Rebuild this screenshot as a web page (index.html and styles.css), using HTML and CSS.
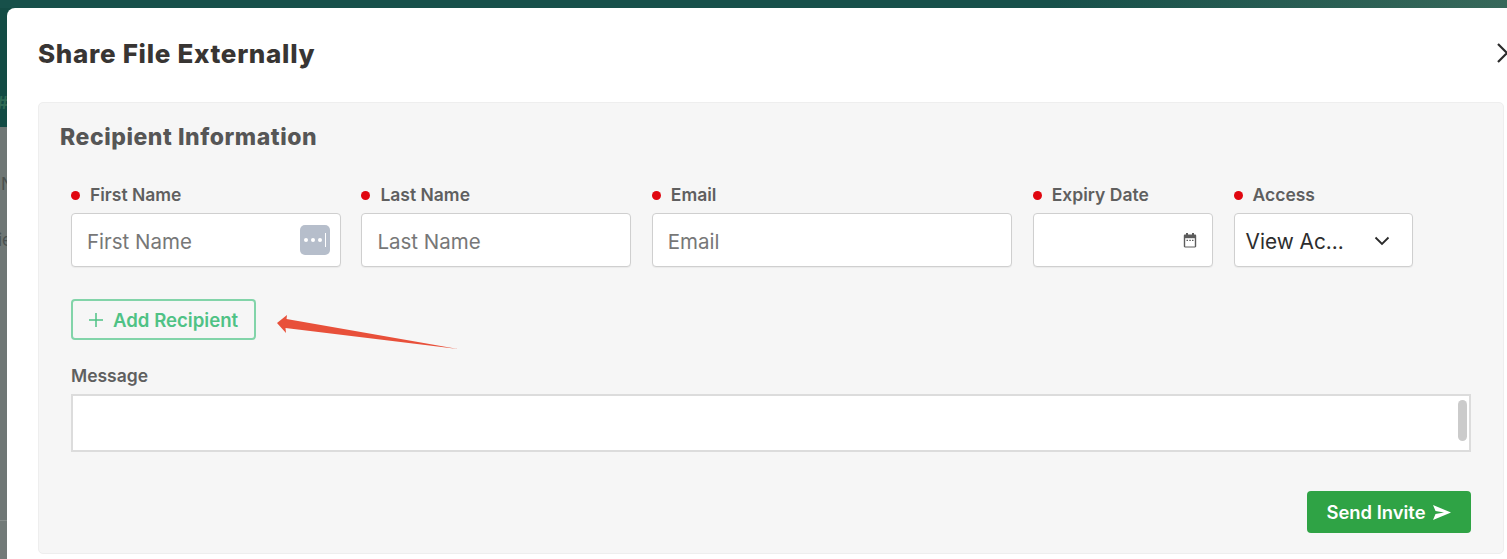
FILE: index.html
```html
<!DOCTYPE html>
<html lang="en">
<head>
<meta charset="utf-8">
<title>Share File Externally</title>
<link rel="stylesheet" href="styles.css">
</head>
<body>
<div class="backdrop">
  <div class="backdrop-header"><span class="hash">#</span></div>
  <div class="backdrop-body">
    <span class="peek peek-n">N</span>
    <span class="peek peek-ie">ie</span>
  </div>
  <div class="backdrop-foot"></div>
</div>

<section class="modal">
  <header class="modal-head">
    <h1 class="modal-title">Share File Externally</h1>
    <svg class="close" width="20" height="20" viewBox="0 0 20 20"><path d="M1 1l18 18M19 1L1 19" fill="none" stroke="#2b2b2b" stroke-width="2.200"/></svg>
  </header>

  <div class="card">
    <h2 class="card-title">Recipient Information</h2>

    <div class="fields">
      <div class="field">
        <label class="label req">First Name</label>
        <div class="input">
          <span class="placeholder">First Name</span>
          <span class="keys"><i></i><i></i><i></i><b></b></span>
        </div>
      </div>
      <div class="field">
        <label class="label req">Last Name</label>
        <div class="input"><span class="placeholder">Last Name</span></div>
      </div>
      <div class="field">
        <label class="label req">Email</label>
        <div class="input"><span class="placeholder">Email</span></div>
      </div>
      <div class="field">
        <label class="label req">Expiry Date</label>
        <div class="input input-end">
          <svg width="16" height="17" viewBox="0 0 16 17"><path d="M4 1h2v1.500h4V1h2v1.500h1c.7 0 1.200.5 1.200 1.200v10.600c0 .7-.5 1.200-1.200 1.200H3c-.7 0-1.200-.5-1.200-1.200V3.700c0-.7.5-1.200 1.200-1.200h1z" fill="#5c5c5c"/><rect x="3.200" y="6.200" width="9.600" height="8.300" fill="#fff"/><path d="M4.500 7.800h1.500v1.300H4.500zM7.300 7.800h1.500v1.300H7.300zM10 7.800h1.500v1.300H10z" fill="#5c5c5c"/></svg>
        </div>
      </div>
      <div class="field">
        <label class="label req">Access</label>
        <div class="input input-select">
          <span class="value">View Ac...</span>
          <svg width="16" height="10" viewBox="0 0 16 10"><path d="M1.500 1.500L8 8l6.500-6.500" fill="none" stroke="#2a2a2a" stroke-width="1.800"/></svg>
        </div>
      </div>
    </div>

    <button class="add-btn" type="button">
      <svg width="14" height="14" viewBox="0 0 14 14"><path d="M7 0v14M0 7h14" stroke="#4fc285" stroke-width="1.500" fill="none"/></svg>
      <span>Add Recipient</span>
    </button>

    <label class="label message-label">Message</label>
    <div class="textarea"><span class="thumb"></span></div>

    <div class="actions">
      <button class="send-btn" type="button">
        <span>Send Invite</span>
        <svg width="20" height="17" viewBox="0 0 20 17"><path d="M1 1l18 7.500L1 16l2.500-6L12 8.500 3.500 7z" fill="#fff"/></svg>
      </button>
    </div>
  </div>
</section>

<svg class="arrow" width="190" height="45" viewBox="0 0 190 45"><path d="M2 13L12 5l-.5 4L183 39 10.500 18 11 23z" fill="#e8503a"/></svg>
</body>
</html>
```

FILE: styles.css
```css
* { box-sizing: border-box; }

html, body {
  margin: 0;
  height: 100%;
  overflow: hidden;
}

body {
  font-family: Inter, "Liberation Sans", sans-serif;
  background: #6f7775;
  color: #333;
}

.backdrop {
  position: absolute;
  inset: 0;
  display: flex;
  flex-direction: column;
}

.backdrop-header {
  height: 127px;
  background: #134b44;
  border-top: 8px solid #1c534c;
  border-image: linear-gradient(90deg, #17504a, #17504a 70%, #37685a) 1;
  position: relative;
  color: #2f6a55;
  font-size: 17px;
  font-weight: 700;
}

.hash {
  position: absolute;
  top: 85px;
  left: -3px;
}

.backdrop-body {
  flex: 1;
  position: relative;
  color: #4a514f;
  font-size: 17px;
}

.peek { position: absolute; }
.peek-n { top: 47px; left: 1px; }
.peek-ie { top: 103px; left: -2px; }

.backdrop-foot {
  height: 39px;
  background: #727a78;
  border-top: 1px solid #868d8b;
}

.modal {
  position: absolute;
  top: 8px;
  left: 7px;
  width: 1530px;
  height: 551px;
  background: #fff;
  border-radius: 8px 0 0 0;
  padding: 0 31px;
}

.modal-head {
  height: 94px;
  display: flex;
  align-items: flex-start;
  justify-content: space-between;
}

.modal-title {
  margin: 30px 0 0;
  font-size: 26px;
  line-height: 32px;
  font-weight: 800;
  color: #383533;
  letter-spacing: .7px;
}

.close {
  position: absolute;
  left: 1490px;
  top: 35px;
}

.card {
  width: 1466px;
  height: 452px;
  background: #f6f6f6;
  border: 1px solid #eeeeee;
  border-radius: 5px;
  padding: 19px 32px 0;
}

.card-title {
  margin: 0 0 0 -11px;
  font-size: 23px;
  line-height: 30px;
  font-weight: 800;
  color: #565656;
  letter-spacing: .55px;
}

.fields {
  display: grid;
  grid-template-columns: 270px 270px 360.6px 180.4px 179.4px;
  column-gap: 20.4px;
  margin-top: 33px;
}

.field {
  display: flex;
  flex-direction: column;
}

.label {
  font-size: 17.500px;
  line-height: 20px;
  font-weight: 600;
  color: #5f5f5f;
  display: flex;
  align-items: center;
}

.label.req::before {
  content: "";
  width: 9px;
  height: 9px;
  border-radius: 50%;
  background: #e0060f;
  margin-right: 10px;
}

.input {
  margin-top: 8px;
  height: 54px;
  background: #fff;
  border: 1px solid #cfcfcf;
  border-radius: 4px;
  display: flex;
  align-items: center;
  justify-content: space-between;
  padding: 2px 10px 0 15px;
  box-shadow: 0 1px 1px rgba(0, 0, 0, .05);
}

.placeholder {
  font-size: 20.500px;
  color: #777;
}

.keys {
  width: 30px;
  height: 30px;
  margin-top: -2px;
  border-radius: 5px;
  background: #b6becb;
  display: flex;
  align-items: center;
  justify-content: center;
  gap: 3px;
}

.keys i {
  width: 4px;
  height: 4px;
  border-radius: 50%;
  background: #fff;
}

.keys b {
  width: 1px;
  height: 14px;
  background: #fff;
}

.input-end {
  justify-content: flex-end;
  padding: 0 14px 0 0;
}

.input-select {
  padding: 2px 22px 0 11px;
}

.value {
  font-size: 20.800px;
  color: #2d2d2d;
}

.add-btn {
  display: flex;
  align-items: center;
  gap: 10px;
  width: 185px;
  height: 41px;
  margin-top: 32px;
  padding: 0 0 0 16px;
  background: transparent;
  border: 2px solid #82d4a9;
  border-radius: 4px;
  color: #4fc285;
  font: 600 18.600px Inter, "Liberation Sans", sans-serif;
}

.message-label {
  margin-top: 26px;
}

.textarea {
  margin-top: 8px;
  height: 58px;
  width: 1400px;
  background: #fff;
  border: 2px solid #dcdcdc;
  display: flex;
  justify-content: flex-end;
  padding: 4px 2px 0 0;
}

.thumb {
  width: 9px;
  height: 41px;
  border-radius: 5px;
  background: #cbcbcb;
}

.actions {
  width: 1400px;
  display: flex;
  justify-content: flex-end;
  margin-top: 39px;
}

.send-btn {
  display: flex;
  align-items: center;
  justify-content: center;
  gap: 6px;
  width: 164px;
  height: 42px;
  padding: 0;
  border: 0;
  border-radius: 4px;
  background: #2fa345;
  color: #fff;
  font: 600 18.400px Inter, "Liberation Sans", sans-serif;
}

.arrow {
  position: absolute;
  left: 275px;
  top: 310px;
}
```
